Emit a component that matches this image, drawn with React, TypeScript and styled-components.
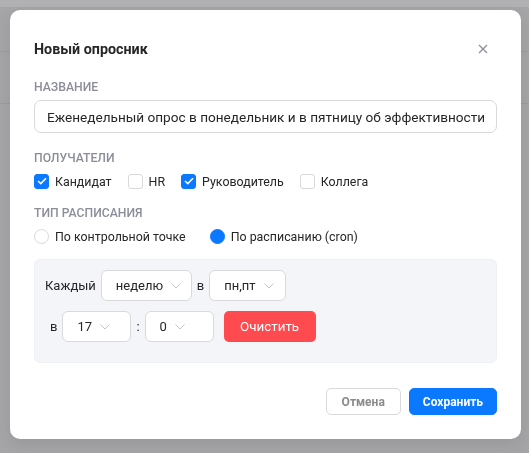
import styled, { createGlobalStyle } from "styled-components";

const GlobalStyle = createGlobalStyle`
  html, body {
    margin: 0;
    padding: 0;
    background: #a5a5a7;
    font-family: "Segoe UI", Roboto, "Noto Sans", sans-serif;
    color: #262626;
  }
  * {
    box-sizing: border-box;
  }
`;

const PageBehind = styled.div`
  display: flex;
  flex-direction: column;
  width: 100vw;
  height: 100vh;
  background: #a5a5a7;
`;

const BehindBar = styled.div<{ $h: number; $light?: boolean }>`
  height: ${(p) => p.$h}px;
  background: ${(p) => (p.$light ? "#b1b1b3" : "#a5a5a7")};
  border-bottom: ${(p) => (p.$light ? "none" : "1px solid #9b9b9d")};
`;

const Overlay = styled.div`
  position: fixed;
  inset: 0;
  padding: 10px;
`;

const Modal = styled.div`
  width: 511px;
  background: #fff;
  border-radius: 10px;
  padding: 24px;
  box-shadow: 0 6px 16px rgba(0, 0, 0, 0.08);
`;

const Header = styled.div`
  display: flex;
  align-items: center;
  justify-content: space-between;
  height: 30px;
`;

const Title = styled.h2`
  margin: 0;
  font-size: 14.3px;
  font-weight: 700;
  color: #262626;
`;

const CloseBtn = styled.button`
  width: 28px;
  height: 28px;
  display: flex;
  align-items: center;
  justify-content: center;
  border: none;
  background: transparent;
  padding: 0;
  cursor: pointer;
`;

const Body = styled.div`
  display: flex;
  flex-direction: column;
  gap: 13px;
  margin-top: 14px;
`;

const Field = styled.div<{ $extra?: number }>`
  display: flex;
  flex-direction: column;
  gap: 4px;
  margin-bottom: ${(p) => p.$extra ?? 0}px;
`;

const Label = styled.div`
  font-size: 12.2px;
  line-height: 18px;
  font-weight: 500;
  color: #8b8e99;
  text-transform: uppercase;
`;

const TextInput = styled.input`
  height: 33px;
  width: 100%;
  border: 1px solid #d9d9d9;
  border-radius: 7px;
  padding: 0 12px;
  font: inherit;
  font-size: 13.6px;
  color: #262626;
  outline: none;
`;

const OptionRow = styled.div<{ $gap: number }>`
  display: flex;
  align-items: center;
  gap: ${(p) => p.$gap}px;
  height: 20px;
`;

const Option = styled.label`
  display: flex;
  align-items: center;
  gap: 6px;
  font-size: 12.4px;
  color: #262626;
`;

const Box = styled.span<{ $on?: boolean }>`
  width: 15px;
  height: 15px;
  border-radius: 3px;
  display: flex;
  align-items: center;
  justify-content: center;
  background: ${(p) => (p.$on ? "#0a78ff" : "#fff")};
  border: 1px solid ${(p) => (p.$on ? "#0a78ff" : "#d9d9d9")};
`;

const Dot = styled.span<{ $on?: boolean }>`
  width: 15px;
  height: 15px;
  border-radius: 50%;
  background: ${(p) => (p.$on ? "#0a78ff" : "#fff")};
  border: 1px solid ${(p) => (p.$on ? "#0a78ff" : "#d9d9d9")};
`;

const CronPanel = styled.div`
  background: #f4f5f9;
  border: 1px solid #eff0f4;
  border-radius: 6px;
  padding: 10px;
`;

const CronRow = styled.div`
  display: flex;
  align-items: center;
  margin-bottom: 10px;
  font-size: 13px;
  color: #262626;
`;

const Word = styled.span<{ $first?: boolean }>`
  margin: 0 5px 0 ${(p) => (p.$first ? 0 : 5)}px;
`;

const Select = styled.div<{ $w: number }>`
  width: ${(p) => p.$w}px;
  height: 31px;
  display: flex;
  align-items: center;
  gap: 8px;
  padding-left: 14px;
  background: #fff;
  border: 1px solid #d9d9d9;
  border-radius: 6px;
  font-size: 13px;
`;

const DangerBtn = styled.button`
  margin-left: 10px;
  width: 92px;
  height: 31px;
  border: none;
  border-radius: 5px;
  background: #ff4b50;
  color: #fff;
  font: inherit;
  font-size: 13.4px;
`;

const Footer = styled.div`
  display: flex;
  justify-content: flex-end;
  gap: 8px;
  margin-top: 25px;
`;

const FooterBtn = styled.button<{ $primary?: boolean }>`
  height: 27px;
  padding: 0 ${(p) => (p.$primary ? 13 : 15)}px;
  border-radius: 5px;
  font: inherit;
  font-size: 12px;
  font-weight: 700;
  background: ${(p) => (p.$primary ? "#0a78ff" : "#fff")};
  color: ${(p) => (p.$primary ? "#fff" : "#8a8a8a")};
  border: 1px solid ${(p) => (p.$primary ? "#0a78ff" : "#d9d9d9")};
`;

const Chevron = () => (
  <svg width="10" height="6" viewBox="0 0 10 6" fill="none">
    <path d="M0.5 0.5L5 5L9.5 0.5" stroke="#c4c4c4" strokeWidth="1" />
  </svg>
);

const Check = () => (
  <svg width="10" height="8" viewBox="0 0 10 8" fill="none">
    <path d="M1 4L3.8 6.6L9 1.2" stroke="#fff" strokeWidth="1.6" />
  </svg>
);

const recipients = [
  { name: "Кандидат", on: true },
  { name: "HR", on: false },
  { name: "Руководитель", on: true },
  { name: "Коллега", on: false },
];

const App = () => {
  return (
    <>
      <GlobalStyle />
      <PageBehind>
        <BehindBar $h={7} $light />
        <BehindBar $h={45} />
        <BehindBar $h={52} />
      </PageBehind>
      <Overlay>
        <Modal>
          <Header>
            <Title>Новый опросник</Title>
            <CloseBtn>
              <svg width="10" height="10" viewBox="0 0 10 10" fill="none">
                <path d="M1 1L9 9M9 1L1 9" stroke="#8c8f96" strokeWidth="1.3" />
              </svg>
            </CloseBtn>
          </Header>
          <Body>
            <Field $extra={3}>
              <Label>Название</Label>
              <TextInput
                readOnly
                value="Еженедельный опрос в понедельник и в пятницу об эффективности"
              />
            </Field>
            <Field>
              <Label>Получатели</Label>
              <OptionRow $gap={16}>
                {recipients.map((r) => (
                  <Option key={r.name}>
                    <Box $on={r.on}>{r.on && <Check />}</Box>
                    {r.name}
                  </Option>
                ))}
              </OptionRow>
            </Field>
            <Field>
              <Label>Тип расписания</Label>
              <OptionRow $gap={24}>
                <Option>
                  <Dot />
                  По контрольной точке
                </Option>
                <Option>
                  <Dot $on />
                  По расписанию (cron)
                </Option>
              </OptionRow>
            </Field>
            <CronPanel>
              <CronRow>
                <Word $first>Каждый</Word>
                <Select $w={91}>
                  неделю <Chevron />
                </Select>
                <Word>в</Word>
                <Select $w={77}>
                  пн,пт <Chevron />
                </Select>
              </CronRow>
              <CronRow>
                <Word>в</Word>
                <Select $w={69}>
                  17 <Chevron />
                </Select>
                <Word>:</Word>
                <Select $w={69}>
                  0 <Chevron />
                </Select>
                <DangerBtn>Очистить</DangerBtn>
              </CronRow>
            </CronPanel>
          </Body>
          <Footer>
            <FooterBtn>Отмена</FooterBtn>
            <FooterBtn $primary>Сохранить</FooterBtn>
          </Footer>
        </Modal>
      </Overlay>
    </>
  );
};

export default App;
